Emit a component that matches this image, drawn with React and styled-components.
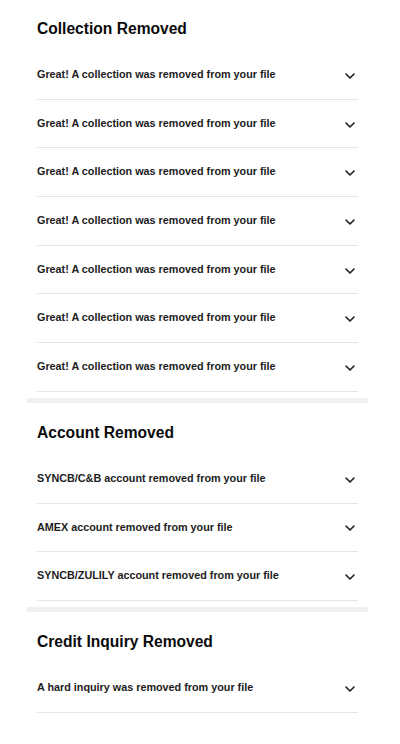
import React from "react";
import styled, { createGlobalStyle } from "styled-components";

const sections = [
  {
    title: "Collection Removed",
    items: Array(7).fill("Great! A collection was removed from your file"),
  },
  {
    title: "Account Removed",
    items: [
      "SYNCB/C&B account removed from your file",
      "AMEX account removed from your file",
      "SYNCB/ZULILY account removed from your file",
    ],
  },
  {
    title: "Credit Inquiry Removed",
    items: ["A hard inquiry was removed from your file"],
  },
];

function Chevron() {
  return (
    <ChevronIcon viewBox="0 2 16 12" aria-hidden="true">
      <path d="M4 6l4 4 4-4" />
    </ChevronIcon>
  );
}

export default function App() {
  return (
    <>
      <GlobalStyle />
      <Page>
        {sections.map((s, i) => (
          <Section key={s.title} first={i === 0} last={i === sections.length - 1}>
            <Title>{s.title}</Title>
            <List>
              {s.items.map((text, j) => (
                <Row key={j}>
                  <RowText>{text}</RowText>
                  <Chevron />
                </Row>
              ))}
            </List>
          </Section>
        ))}
      </Page>
    </>
  );
}

const GlobalStyle = createGlobalStyle`
  body {
    margin: 0;
    background: #ffffff;
    font-family: "Liberation Sans", Arial, sans-serif;
  }
`;

const Page = styled.div`
  width: 341px;
  margin-left: 27px;
`;

const Section = styled.section`
  padding: ${(p) => (p.first ? "19px" : "20px")} 10px 6px;
  border-bottom: ${(p) => (p.last ? "none" : "5px solid #eef1f4")};
`;

const Title = styled.h2`
  margin: 0;
  font-size: 15.6px;
  line-height: 20px;
  font-weight: 700;
  color: #0b0b0b;
`;

const List = styled.div`
  margin-top: 12px;
`;

const Row = styled.div`
  display: flex;
  align-items: center;
  justify-content: space-between;
  padding: 16px 0;
  border-bottom: 1px solid #e4e5e7;
`;

const RowText = styled.span`
  font-size: 10.8px;
  line-height: 15.68px;
  font-weight: 700;
  color: #1c1c1c;
`;

const ChevronIcon = styled.svg`
  width: 16px;
  height: 12px;
  margin-top: 2px;
  flex-shrink: 0;
  fill: none;
  stroke: #1c1c1c;
  stroke-width: 1.6;
  stroke-linecap: round;
  stroke-linejoin: round;
`;
